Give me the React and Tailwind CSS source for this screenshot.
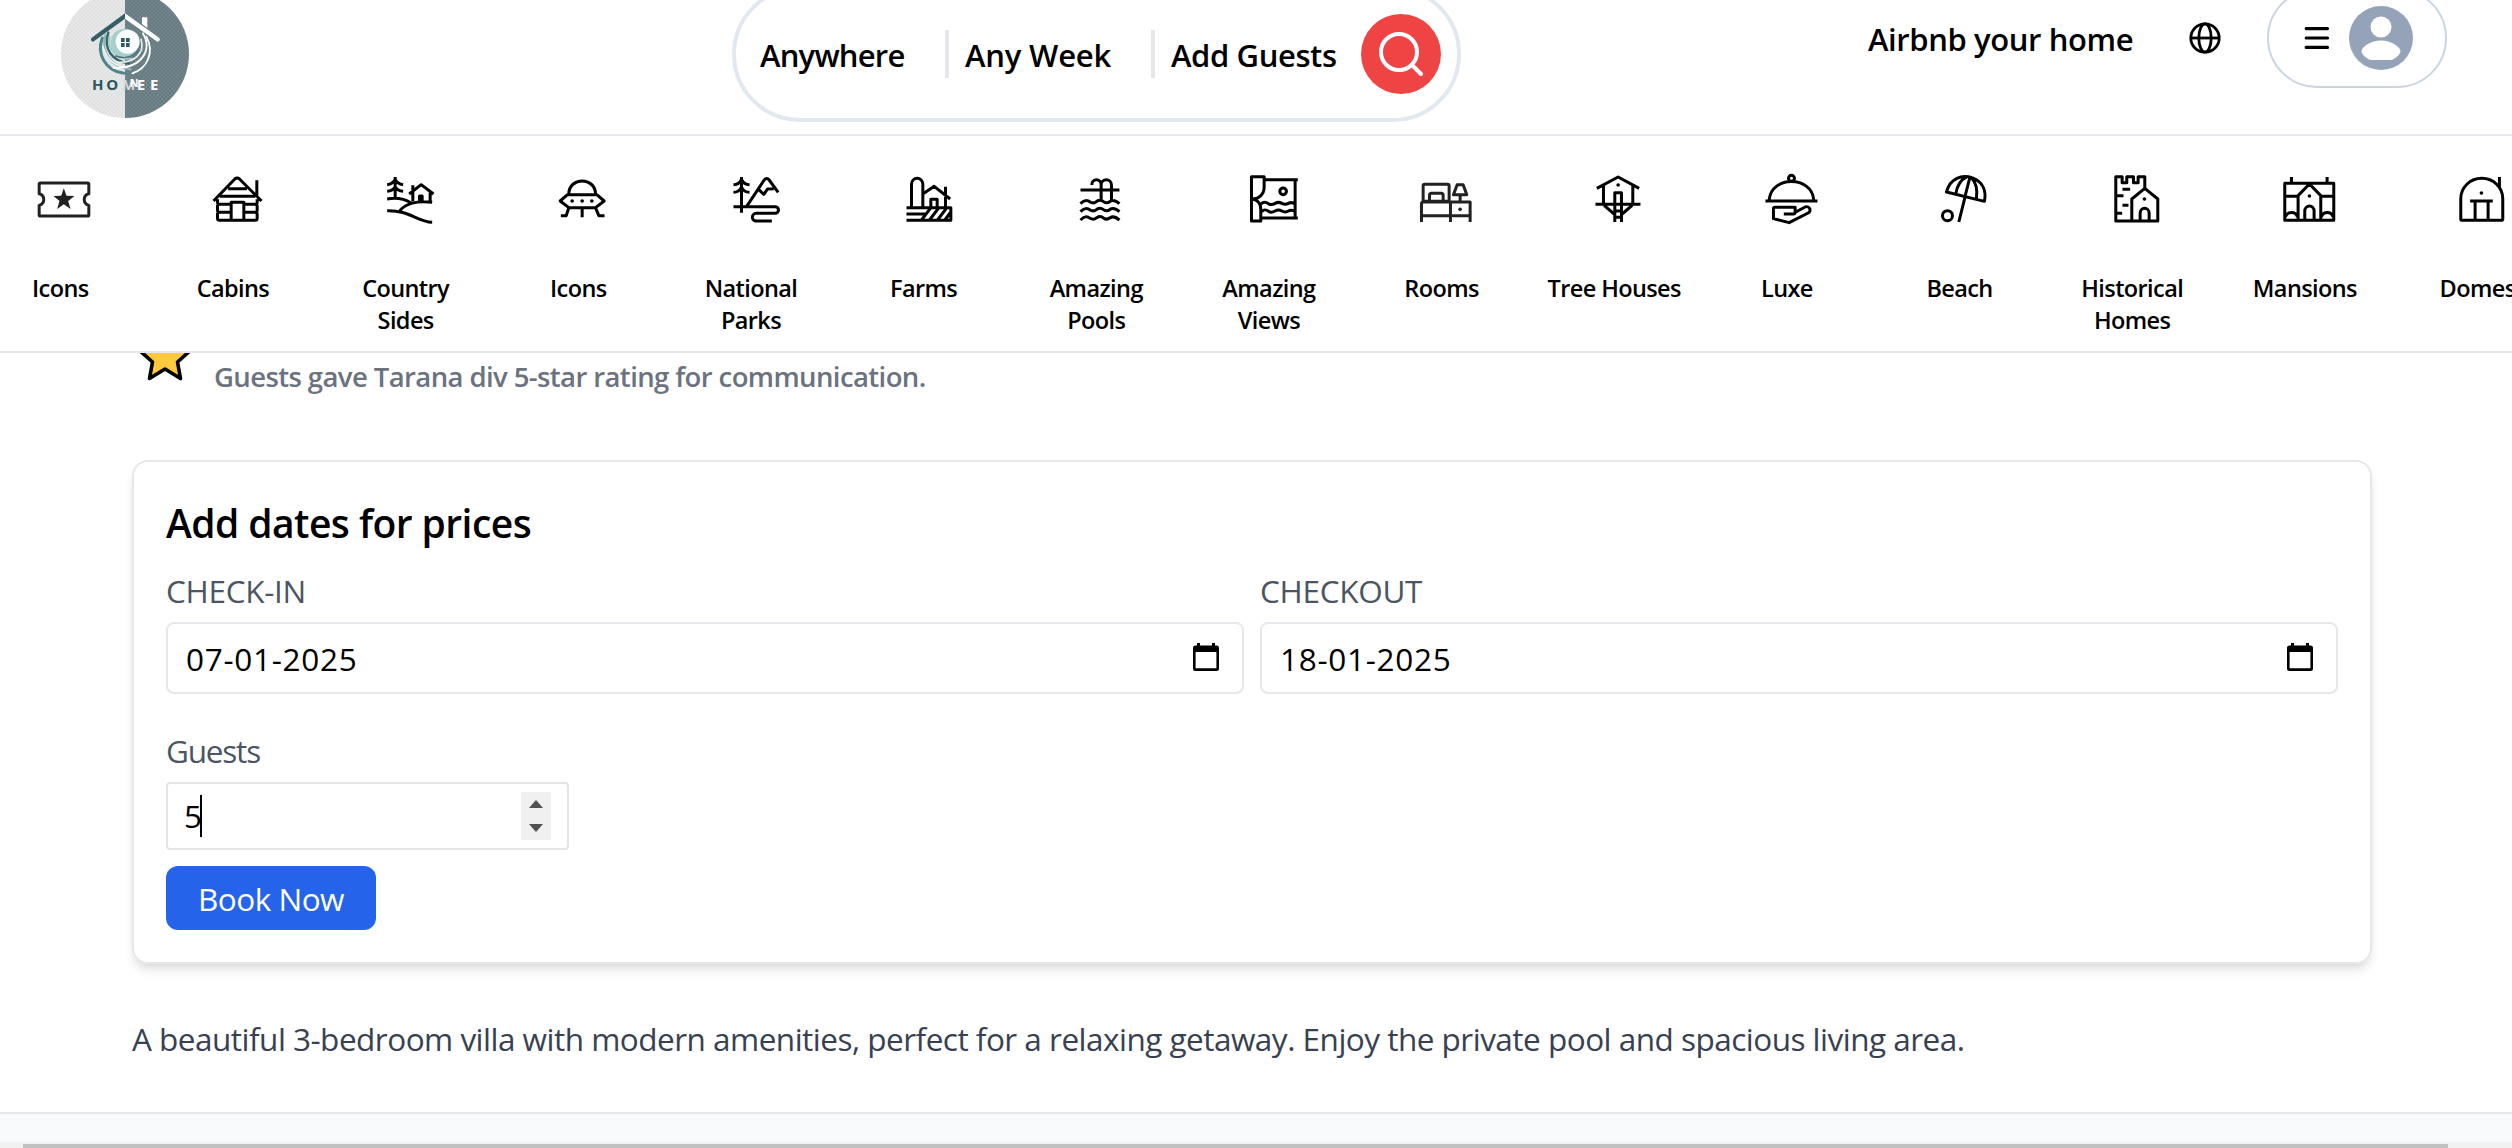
const wave = (x, y) =>
  `M${x} ${y + 4}c12-12 20-12 29-5c8 5 14 3 20-2c7-5 13-5 20 1c8 6 14 4 20-1c8-5 16-3 28 7`;

const categories = [
  {
    label: "Icons",
    box: "103.5 510 180 180",
    tone: "#222222",
    d: "M123 549H264a4 4 0 0 1 4 4V581a18 18 0 0 0 0 35V644a4 4 0 0 1-4 4H123a4 4 0 0 1-4-4V616a18 18 0 0 0 0-35V553a4 4 0 0 1 4-4z",
    fill: "M193 565L201 587L225 588L206 603L213 627L193 613L173 627L180 603L162 588L185 587Z",
  },
  {
    label: "Cabins",
    box: "621.5 510 180 180",
    d: "M641 603L705 537q7-6 14 0L785 603M771 541V592M685 566H741M660 589H766M694 661V607H732V661M694 613H659a6 6 0 0 1-6-6V598M694 613H659a6 6 0 0 0-6 6V631a6 6 0 0 0 6 6H694M694 637H659a6 6 0 0 0-6 6V655a6 6 0 0 0 6 6H766a6 6 0 0 0 6-6V643a6 6 0 0 0-6-6H732M732 637H766a6 6 0 0 0 6-6V619a6 6 0 0 0-6-6H732M732 613H766a6 6 0 0 0 6-6V598",
  },
  {
    label: "Country Sides",
    box: "1139.5 510 180 180",
    d: "M1185 531V592M1161 554q17-2 24-16q7 14 24 16M1161 574q17-2 24-14q7 12 24 14M1161 597C1190 592 1215 598 1233 609M1296 607C1250 600 1215 612 1199 632M1161 632C1225 630 1250 664 1296 667M1227 582L1263 554L1300 582M1238 556V604M1290 578V606M1258 604V588H1266V604",
  },
  {
    label: "Icons",
    box: "157.5 120 180 180",
    d: "M208 192C208 140 288 140 288 192M204 194H292L314 213L288 233H208L182 213ZM248 233V262M208 233L200 257H184M288 233L298 257H315",
    dots: [[218, 213], [248, 213], [277, 213]],
  },
  {
    label: "National Parks",
    box: "675.5 120 180 180",
    d: "M725 141V248M701 164q17 0 24-16q7 16 24 16M701 187q17 0 24-16q7 16 24 16M740 230L793 150q8-9 15 0L835 187M776 178L792 193L803 177L822 176M701 230H826a10 10 0 0 1 0 20H769a11.500 11.500 0 0 0 0 23H816",
  },
  {
    label: "Farms",
    box: "1193.5 120 180 180",
    d: "M1234 230V162a17 17 0 0 1 34 0V230M1268 192L1302 169L1350 207M1336 170V230M1292 230V208H1311V230M1219 233H1352V271H1219M1219 252H1275M1290 236L1264 270M1314 236L1288 270M1338 236L1312 270M1352 246L1334 270",
  },
  {
    label: "Amazing Pools",
    box: "211.6 120 180 180",
    d: `M243 180H360M277 165C277 144 305 144 305 165V214M305 165C305 144 336 144 336 165V214${wave(243, 217)}${wave(243, 241)}${wave(243, 266)}`,
  },
  {
    label: "Amazing Views",
    box: "729.6 120 180 180",
    d: "M755 140H793V172C793 195 775 207 757 207C775 210 783 220 783 238V273H755ZM793 149H894M886 149V264M783 264H894M784 222c8-8 15-6 22-1s13 3 20-1 13-4 20 0 13 4 20 0 12-3 20 2M786 245c8-8 13-6 20-1s13 3 20-1 13-4 20 0 13 4 20 0 12-3 20 2",
    rings: [[850, 184, 10]],
  },
  {
    label: "Rooms",
    box: "1247.6 120 180 180",
    tone: "#222222",
    d: "M1269 213V168a5 5 0 0 1 5-5H1342a5 5 0 0 1 5 5V213M1288 210V196a6 6 0 0 1 6-6h29a6 6 0 0 1 6 6V210M1266 214H1351M1264 276V222a6 6 0 0 1 6-6H1410V276M1351 216V276M1264 257H1410M1371 164H1389L1400 194H1360ZM1380 194V216",
    dots: [[1380, 238]],
  },
  {
    label: "Tree Houses",
    box: "265.6 120 180 180",
    d: "M292 175L356 141L419 175M312 166V222M400 166V222M288 223H423M346 276V188H366V276M346 243H366M346 262H366M314 226L344 252M398 226L368 252",
    dots: [[356, 165]],
  },
  {
    label: "Luxe",
    box: "783.6 120 180 180",
    d: "M797 213H953M808 210C814 136 936 136 942 210M852 252H880q6 0 6-6V232H826a5 5 0 0 0-5 5V266L868 278L925 249a10 10 0 0 0-9-18L888 246",
    rings: [[875, 145, 9]],
  },
  {
    label: "Beach",
    box: "1301.6 120 180 180",
    d: "M1339 186C1350 144 1386 133 1417 144C1448 155 1459 182 1453 214ZM1367 192C1370 165 1385 147 1399 141M1395 198L1409 143M1429 206C1432 180 1427 156 1414 144M1395 200L1376 276",
    rings: [[1342, 257, 15]],
  },
  {
    label: "Historical Homes",
    box: "319.6 120 180 180",
    d: "M436 175V140H416V158H402V140H382V158H368V140H349V273H475V207L436 175L397 207V273M422 273V250a13.500 15 0 0 1 27 0V273M369 178H392M349 197H372M369 226H387M349 250H368",
    dots: [[435, 207]],
  },
  {
    label: "Mansions",
    box: "837.7 120 180 180",
    d: "M855 160H1002V271H855ZM875 141V160M982 141V160M895 271V197L929 162L963 197V271M855 199H895M963 199H1002M915 271V243a14 15 0 0 1 28 0V271M857 260C863 243 887 243 893 260M965 260C971 243 994 243 1000 260",
    dots: [[929, 198]],
  },
  {
    label: "Domes",
    box: "1355.7 120 180 180",
    d: "M1382 267V206a63 61 0 0 1 126 0V267a4 4 0 0 1-4 4H1386a4 4 0 0 1-4-4zM1498 141V175M1410 213H1478M1425 213V271M1464 213V271",
    dots: [[1444, 189]],
  },
];

function CategoryIcon({ box, d, fill, dots = [], rings = [], tone = "#000000" }) {
  return (
    <svg viewBox={box} className="ml-2 size-[60px] shrink-0" fill="none" stroke={tone} strokeWidth="9">
      <path d={d} strokeLinejoin="round" />
      {fill && <path d={fill} fill={tone} stroke="none" />}
      {dots.map(([x, y]) => (
        <circle key={x} cx={x} cy={y} r="5.500" fill={tone} stroke="none" />
      ))}
      {rings.map(([x, y, r]) => (
        <circle key={x} cx={x} cy={y} r={r} />
      ))}
    </svg>
  );
}

function Logo() {
  return (
    <svg viewBox="18 -30 384 384" className="-mt-[10px] ml-[61px] size-32 shrink-0">
      <defs>
        <clipPath id="disc">
          <circle cx="210" cy="162" r="192" />
        </clipPath>
        <pattern id="weave" width="12" height="12" patternUnits="userSpaceOnUse">
          <path d="M0 0h6v6H0zM6 6h6v6H6z" fill="#ffffff" opacity="0.14" />
        </pattern>
      </defs>
      <g clipPath="url(#disc)">
        <path d="M18-30h192v384H18z" fill="#dfe0e0" />
        <path d="M210-30h192v384H210z" fill="#657b81" />
        <path d="M18-30h192v384H18z" fill="url(#weave)" />
        <path d="M18-30h192v384H18z" fill="url(#weave)" />
        <path d="M210-30h192v384H210z" fill="url(#weave)" opacity="0.6" />
      </g>
      <g fill="none" strokeLinecap="round">
        <path d="M142 114C124 160 150 212 206 220" stroke="#4e858a" strokeWidth="9" />
        <path d="M152 104C136 156 168 202 226 208" stroke="#8cb8b8" strokeWidth="7" />
        <path d="M144 140C156 184 190 206 224 198" stroke="#e9f3f3" strokeWidth="5" />
        <path d="M160 98C144 148 172 184 222 190" stroke="#35626b" strokeWidth="7" />
        <path d="M164 110C154 150 190 180 230 176" stroke="#a4cccb" strokeWidth="6" />
        <path d="M264 100C292 150 262 206 176 204" stroke="#ffffff" strokeWidth="5.500" />
        <path d="M274 110C300 158 276 206 232 220" stroke="#ffffff" strokeWidth="5.500" />
        <path d="M258 118C272 160 236 192 184 186" stroke="#e7efef" strokeWidth="5" />
        <path d="M250 150C236 170 210 178 182 168" stroke="#4c7a80" strokeWidth="5" />
      </g>
      <circle cx="209" cy="128" r="42" fill="#a5d0cd" />
      <circle cx="218" cy="125" r="36" fill="#f8fcfc" />
      <path d="M198 114h11v12h-11zM213 114h11v12h-11zM198 129h11v12h-11zM213 129h11v12h-11z" fill="#2c5963" />
      <path d="M261 52h16v32l-16-12z" fill="#ffffff" />
      <path d="M210 40V56L118 123a6 6 0 0 1-8-10z" fill="#355f68" />
      <path d="M210 40L312 113a6 6 0 0 1-8 10L210 56z" fill="#ffffff" />
      <g fontFamily="'Open Sans', sans-serif" fontWeight="700" fontSize="45">
        <text x="111" y="270" fill="#2a5560">H</text>
        <text x="154" y="270" fill="#2a5560">O</text>
        <text x="201" y="270" fontSize="42" fill="#d5dfe1">M</text>
        <text x="224" y="262" fontSize="32" fill="#ffffff">N</text>
        <text x="245" y="270" fill="#ffffff">E</text>
        <text x="285" y="270" fill="#ffffff">E</text>
      </g>
    </svg>
  );
}

function DateField({ label, value }) {
  return (
    <div className="flex flex-1 flex-col">
      <span className="text-[31.5px] leading-[50px] tracking-[-0.3px] text-[#4b5563]">{label}</span>
      <div className="mt-1.5 flex h-[72px] items-center justify-between rounded-lg border-2 border-[#e5e7eb] pr-[23px] pl-[18px]">
        <span className="pt-px text-[31.5px] leading-[48px] tracking-[0.7px]">{value}</span>
        <svg viewBox="0 0 26 28" className="-mt-0.5 h-7 w-[26px]">
          <path
            fillRule="evenodd"
            d="M4 0h3v2.500h12V0h3v2.500h1.500A2.500 2.500 0 0 1 26 5v20.500a2.500 2.500 0 0 1-2.500 2.500h-21A2.500 2.500 0 0 1 0 25.500V5a2.500 2.500 0 0 1 2.500-2.500H4zM2.600 9v16.300h20.800V9z"
          />
        </svg>
      </div>
    </div>
  );
}

function Header() {
  return (
    <header className="flex h-[136px] shrink-0 items-start border-b-2 border-[#e5e7eb] font-semibold">
      <Logo />
      <div className="-mt-[14px] ml-[543px] flex h-[136px] w-[729px] shrink-0 items-center rounded-full border-4 border-[#e2e8f0] pl-6 text-[31px] leading-[48px] whitespace-nowrap">
        <span className="w-[185px] pt-0.5 tracking-[-0.8px]">Anywhere</span>
        <span className="h-12 w-1 bg-[#e5e7eb]" />
        <span className="ml-4 w-[186px] pt-0.5 tracking-[-0.2px]">Any Week</span>
        <span className="h-12 w-1 bg-[#e5e7eb]" />
        <span className="ml-4 w-[190px] pt-0.5 tracking-[-0.4px]">Add Guests</span>
        <span className="flex size-20 items-center justify-center rounded-full bg-[#ef4444]">
          <svg viewBox="0 0 48 48" className="size-12" fill="none" stroke="#ffffff" strokeWidth="4" strokeLinecap="round">
            <circle cx="22" cy="22" r="18" />
            <path d="M35 35L44 44" />
          </svg>
        </span>
      </div>
      <div className="-mt-[12px] mr-[65px] ml-auto flex h-[100px] items-center">
        <span className="w-[321px] pt-0.5 text-[31px] leading-[48px] tracking-[-0.4px]">Airbnb your home</span>
        <svg viewBox="0 0 32 32" className="size-8" fill="none" stroke="#000000" strokeWidth="2.800">
          <circle cx="16" cy="16" r="14.200" />
          <ellipse cx="16" cy="16" rx="6.200" ry="14.200" />
          <path d="M2 16H30" />
        </svg>
        <div className="ml-[46px] flex h-[100px] w-[180px] items-center rounded-full border-2 border-[#cbd5e1] pl-[35px]">
          <svg viewBox="0 0 26 24" className="h-6 w-[26px]" stroke="#000000" strokeWidth="3.200" strokeLinecap="round">
            <path d="M2.200 2.600H23.500M2.200 12H23.500M2.200 21.400H23.500" />
          </svg>
          <svg viewBox="0 0 64 64" className="ml-[19px] size-16">
            <circle cx="32" cy="32" r="32" fill="#94a3b8" />
            <circle cx="32" cy="21" r="10.500" fill="#ffffff" />
            <path d="M32 34.500C42 34.500 51.500 41 51.500 45C51.500 48.500 45 54 42 54H22C19 54 12.500 48.500 12.500 45C12.500 41 22 34.500 32 34.500z" fill="#ffffff" />
          </svg>
        </div>
      </div>
    </header>
  );
}

export default function App() {
  return (
    <div className="flex h-[1148px] w-full flex-col overflow-hidden bg-white font-['Open_Sans','Noto_Sans',sans-serif] text-black">
      <Header />

      <nav className="h-[217px] shrink-0 overflow-hidden border-b-2 border-[#e5e7eb]">
        <div className="-ml-[26px] flex pt-[34px]">
          {categories.map((c, i) => (
            <div key={i} className="flex w-[172.67px] shrink-0 flex-col items-center">
              <CategoryIcon {...c} />
              <span className="mt-[42px] w-[140px] text-center text-[23.5px] leading-8 font-semibold tracking-[-0.6px]">
                {c.label}
              </span>
            </div>
          ))}
        </div>
      </nav>

      <main className="flex flex-col">
        <div className="flex h-[107px] items-start pl-[137px]">
          <svg viewBox="0 0 56 28" className="h-7 w-14">
            <path
              d="M2-3L15.500 9L12.500 25.500L28 16L43.500 25.500L40.500 9L54-3z"
              fill="#ffc83d"
              stroke="#000000"
              strokeWidth="3.600"
              strokeLinejoin="round"
            />
          </svg>
          <p className="mt-1 ml-[21px] text-[27.5px] leading-[40px] font-semibold tracking-[-0.6px] text-[#6b7280]">
            Guests gave Tarana div 5-star rating for communication.
          </p>
        </div>

        <section className="mx-[132px] w-[2240px] rounded-2xl border-2 border-[#e5e7eb] p-8 shadow-[0_8px_12px_-2px_rgb(0_0_0/0.1),0_4px_8px_-4px_rgb(0_0_0/0.1)]">
          <h2 className="pt-px text-[39px] leading-[56px] font-semibold tracking-[-0.55px]">Add dates for prices</h2>
          <div className="mt-[15px] flex gap-4">
            <DateField label="CHECK-IN" value="07-01-2025" />
            <DateField label="CHECKOUT" value="18-01-2025" />
          </div>
          <div className="mt-8 flex flex-col items-start">
            <span className="pt-px text-[31.5px] leading-[48px] tracking-[-1.2px] text-[#4b5563]">Guests</span>
            <div className="mt-[7px] flex h-[68px] w-[403px] items-center rounded border-2 border-[#e5e5e5] pr-4 pl-4">
              <span className="w-4 text-[31.5px] leading-[48px]">5</span>
              <span className="h-[42px] w-0.5 bg-black" />
              <span className="ml-auto flex h-12 w-[30px] items-center justify-center bg-[#f0f0f0]">
                <svg viewBox="0 0 14 32" className="h-8 w-[14px]" fill="#505050">
                  <path d="M0 8L7 0L14 8zM0 24L7 32L14 24z" />
                </svg>
              </span>
            </div>
            <button className="mt-4 h-16 w-[210px] rounded-xl bg-[#2563eb] pt-px text-[31.5px] leading-[48px] tracking-[-0.5px] text-white">
              Book Now
            </button>
          </div>
        </section>

        <p className="mt-[49px] mb-[47px] ml-[132px] text-[31.5px] leading-[52px] tracking-[-0.51px] whitespace-nowrap text-[#374151]">
          A beautiful 3-bedroom villa with modern amenities, perfect for a relaxing getaway. Enjoy the private pool and
          spacious living area.
        </p>
      </main>

      <footer className="flex grow flex-col justify-end border-t-2 border-[#e5e7eb] bg-[#f9fafb]">
        <div className="flex h-1.5 items-end bg-[#f1f1f1] pr-16 pl-[23px]">
          <div className="h-1 w-full bg-[#c1c1c1]" />
        </div>
      </footer>
    </div>
  );
}
